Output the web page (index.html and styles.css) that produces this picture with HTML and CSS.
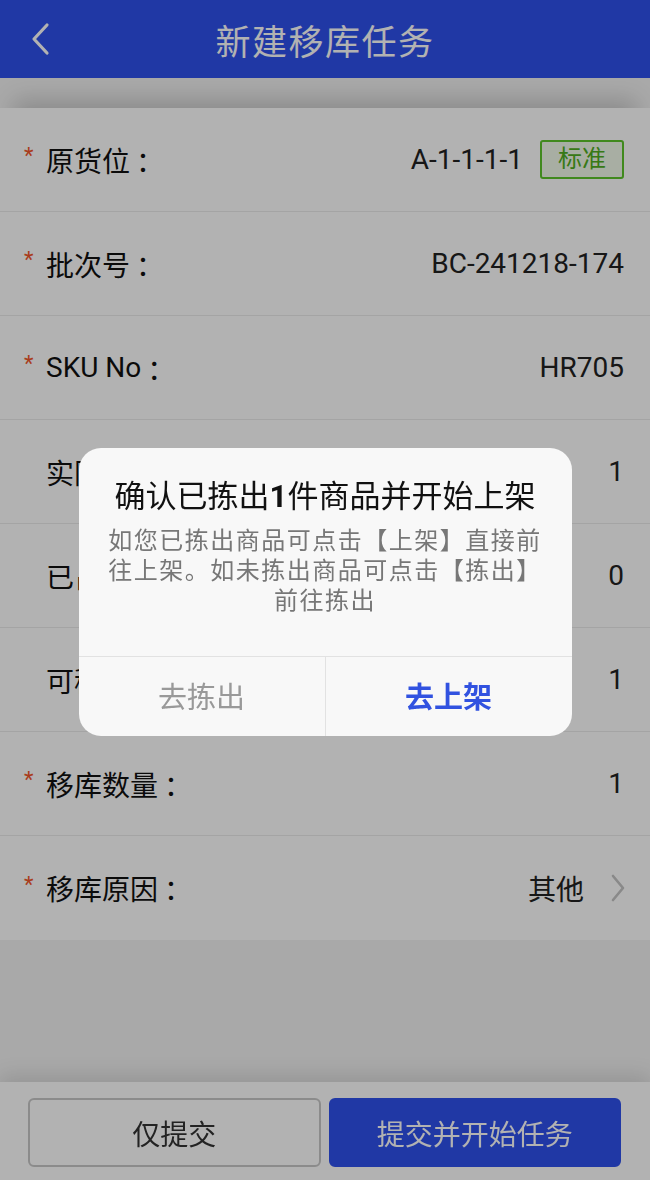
FILE: index.html
```html
<!DOCTYPE html>
<html>
<head>
    <meta charset="utf-8">
    <title>新建移库任务</title>
    <link rel="stylesheet" href="styles.css">
</head>
<body>

<div class="header">
	<span class="back">
		<svg width="22" height="34" viewBox="0 0 22 34"><path d="M18 3 L5 17 L18 31" fill="none" stroke="#fff" stroke-width="3.2" stroke-linecap="round" stroke-linejoin="round"/></svg>
	</span>
	<h1>新建移库任务</h1>
</div>

<ul class="form">
	<li><label><i>*</i>原货位<s>：</s></label><span class="val">A-1-1-1-1<b class="tag">标准</b></span></li>
	<li><label><i>*</i>批次号<s>：</s></label><span class="val">BC-241218-174</span></li>
	<li><label><i>*</i>SKU No<s>：</s></label><span class="val">HR705</span></li>
	<li><label><i></i>实际库存<s>：</s></label><span class="val">1</span></li>
	<li><label><i></i>已占用数量<s>：</s></label><span class="val">0</span></li>
	<li><label><i></i>可移库数量<s>：</s></label><span class="val">1</span></li>
	<li><label><i>*</i>移库数量<s>：</s></label><span class="val">1</span></li>
	<li><label><i>*</i>移库原因<s>：</s></label><span class="val">其他<svg class="arrow" width="16" height="28" viewBox="0 0 16 28"><path d="M3 2 L13 14 L3 26" fill="none" stroke="#c4c4c4" stroke-width="2.6" stroke-linecap="round" stroke-linejoin="round"/></svg></span></li>
</ul>

<div class="footer">
	<a href="javascript:;" class="btn">仅提交</a>
	<a href="javascript:;" class="btn primary">提交并开始任务</a>
</div>

<div class="mask">
	<div class="dialog">
		<div class="content">
			<h3>确认已拣出<em>1</em>件商品并开始上架</h3>
			<p>如您已拣出商品可点击【上架】直接前往上架。如未拣出商品可点击【拣出】前往拣出</p>
		</div>
		<div class="ops">
			<a href="javascript:;">去拣出</a>
			<a href="javascript:;" class="ok">去上架</a>
		</div>
	</div>
</div>

</body>
</html>
```

FILE: styles.css
```css
*{ margin:0; padding:0; box-sizing: border-box;}
li{ list-style: none;}
a{ text-decoration: none;}
body{ width:650px; height:1180px; background:#f2f2f2; font-family: Roboto, "Noto Sans CJK SC", sans-serif; color:#111; overflow: hidden;}

/* header */
.header{ position: relative; height:78px; background:#2f51ec; display: flex; align-items: center; justify-content: center;}
.header h1{ font-size:35px; font-weight: normal; color:#fff; letter-spacing: 1.5px;}
.header .back{ position: absolute; left:29px; top:22px;}

/* form */
.form{ margin-top:30px; background:#fff; box-shadow: 0 -22px 22px -14px rgba(0,0,0,.18);}
.form li{ height:104px; padding:0 26px 0 24px; border-bottom:1px solid #ebebeb; display: flex; align-items: center; justify-content: space-between; font-size:28px;}
.form li:last-child{ border-bottom: none;}
.form label{ display: flex; align-items: center;}
.form label i{ width:22px; font-style: normal; font-size:22px; color:#f2562a; margin-top:-8px;}
.form label s{ text-decoration: none; margin-left:6px;}
.form .val{ display: flex; align-items: center; color:#222;}
.form .tag{ margin-left:17px; height:39px; padding:0 16px; border:2px solid #5cc42a; border-radius:3px; background:#f1f9ea; font-size:24px; font-weight: normal; color:#4fae22; line-height:35px;}
.form .arrow{ margin-left:26px; margin-right:-2px;}

/* footer */
.footer{ position: fixed; left:0; bottom:0; width:650px; height:98px; background:#fff; padding:16px 29px 13px 28px; display: flex; gap:8px; box-shadow: 0 -6px 20px rgba(0,0,0,.12);}
.footer .btn{ flex:1; display: flex; align-items: center; justify-content: center; border:2px solid #c8c8c8; border-radius:6px; font-size:28px; color:#333;}
.footer .btn.primary{ background:#2f51ec; border-color:#2f51ec; color:#fff;}

/* dialog */
.mask{ position: fixed; left:0; top:0; width:650px; height:1180px; background:rgba(0,0,0,.3); display: flex; justify-content: center; padding-top:448px;}
.dialog{ width:493px; height:288px; background:#f8f8f8; border-radius:22px; overflow: hidden; display: flex; flex-direction: column;}
.dialog .content{ flex:1; padding:28px 26px 0; text-align: center;}
.dialog h3{ font-size:31px; font-weight: normal; line-height:42px; color:#111;}
.dialog h3 em{ font-style: normal; font-weight: bold;}
.dialog p{ margin-top:8px; font-size:24px; letter-spacing:1.5px; line-height:30px; color:#777;}
.dialog .ops{ height:80px; border-top:1px solid #e2e2e2; display: flex;}
.dialog .ops a{ flex:1; display: flex; align-items: center; justify-content: center; padding-bottom:4px; font-size:29px; color:#999;}
.dialog .ops a.ok{ border-left:1px solid #e2e2e2; color:#3152e0; font-weight: bold;}
```
